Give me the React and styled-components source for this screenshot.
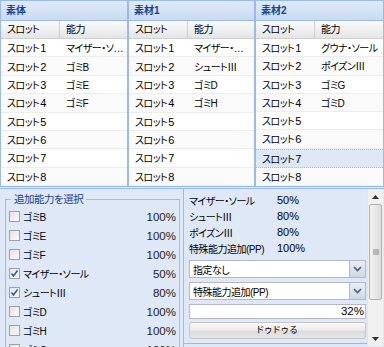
import React from "react";
import styled, { createGlobalStyle } from "styled-components";

const GlobalStyle = createGlobalStyle`
  html, body { margin: 0; padding: 0; }
  body {
    font-family: "Liberation Sans", "Noto Sans CJK JP", sans-serif;
    font-size: 10px;
    letter-spacing: -0.5px;
    color: #000;
    background: #fff;
    font-feature-settings: "palt";
  }
  * { box-sizing: border-box; }
`;

const Root = styled.div`
  width: 384px;
  height: 347px;
  overflow: hidden;
  display: flex;
  flex-direction: column;
  background: #dfe8f6;
`;

const GridArea = styled.div`
  display: grid;
  grid-template-columns: 128px 127px 129px;
  height: 188px;
  flex: none;
`;

const Panel = styled.div`
  height: 187px;
  border: 1px solid #99bbe8;
  background: #fff;
  display: flex;
  flex-direction: column;
  overflow: hidden;
`;

const PanelTitle = styled.div`
  height: 20px;
  flex: none;
  border-bottom: 1px solid #99bbe8;
  background: linear-gradient(#dfeaf8, #c9dbf1);
  color: #15428b;
  font-weight: bold;
  line-height: 19px;
  padding-left: 5px;
  letter-spacing: 0;
`;

const HeaderRow = styled.div`
  height: 18px;
  flex: none;
  display: grid;
  grid-template-columns: 59px 1fr;
  border-bottom: 1px solid #d0d0d0;
  background: linear-gradient(#fbfbfb, #e4e5e7);
`;

const HeaderCell = styled.div`
  padding-left: 6px;
  line-height: 17px;
  border-right: ${(p) => (p.$last ? "none" : "1px solid #d0d0d0")};
  white-space: nowrap;
  overflow: hidden;
`;

const Row = styled.div`
  flex: 1;
  display: grid;
  grid-template-columns: 59px 1fr;
  align-items: center;
  background: ${(p) => (p.$selected ? "#dfe8f6" : p.$alt ? "#fafafa" : "#fff")};
  border-bottom: ${(p) => (p.$selected ? "1px dotted #a3bae9" : "1px solid #ededed")};
  border-top: ${(p) => (p.$selected ? "1px dotted #a3bae9" : "none")};
`;

const Cell = styled.div`
  padding: 0 3px 0 6px;
  white-space: nowrap;
  overflow: hidden;
  text-overflow: ellipsis;
`;

const Num = styled.span`
  font-size: 11px;
  letter-spacing: 0;
  margin-left: 1px;
`;

const Bottom = styled.div`
  flex: 1;
  display: flex;
  border-top: 1px solid #99bbe8;
  min-height: 0;
`;

const LeftPane = styled.div`
  width: 184px;
  flex: none;
  border-right: 1px solid #99bbe8;
  padding: 4px 3px 0 5px;
  overflow: hidden;
`;

const FieldSet = styled.fieldset`
  margin: 0;
  border: 1px solid #b5b8c8;
  padding: 1px 3px 0 3px;
  min-width: 0;
`;

const Legend = styled.legend`
  color: #15428b;
  padding: 0 3px;
  margin-left: 2px;
  line-height: 13px;
  font-size: 10.5px;
`;

const CheckRow = styled.div`
  height: 19px;
  display: flex;
  align-items: center;
`;

const Box = styled.span`
  width: 11px;
  height: 11px;
  flex: none;
  border: 1px solid #a0a0a0;
  background: linear-gradient(135deg, #e4e4e4, #fbfbfb);
  margin-right: 3px;
  display: flex;
  align-items: center;
  justify-content: center;
`;

const CheckLabel = styled.span`
  flex: 1;
  white-space: nowrap;
`;

const Percent = styled.span`
  flex: none;
  font-size: 11.5px;
  letter-spacing: 0;
  color: #222;
`;

const RightPane = styled.div`
  width: 183px;
  flex: none;
  height: 155px;
  border-bottom: 1px solid #99bbe8;
  padding: 3px 1px 0 5px;
  display: flex;
  flex-direction: column;
`;

const StatLine = styled.div`
  height: 16px;
  display: flex;
  align-items: center;
`;

const StatName = styled.span`
  width: 88px;
  white-space: nowrap;
`;

const StatPct = styled.span`
  font-size: 11px;
  letter-spacing: 0;
`;

const Select = styled.div`
  height: 18px;
  margin-top: ${(p) => p.$mt}px;
  border: 1px solid #b5b8c8;
  background: #fff;
  display: flex;
  align-items: center;
`;

const SelectText = styled.span`
  flex: 1;
  padding-left: 3px;
  white-space: nowrap;
`;

const Trigger = styled.span`
  width: 16px;
  height: 16px;
  border-left: 1px solid #b5b8c8;
  background: linear-gradient(#e9eef5, #cdd7e4);
  display: flex;
  align-items: center;
  justify-content: center;
`;

const Input = styled.div`
  height: 15px;
  margin-top: 4px;
  border: 1px solid #b5b8c8;
  background: #fff;
  text-align: right;
  padding-right: 1px;
  line-height: 13px;
  font-size: 11.5px;
  letter-spacing: 0;
`;

const Button = styled.div`
  height: 17px;
  margin-top: 3px;
  border: 1px solid #c4c4c4;
  border-radius: 3px;
  background: linear-gradient(#fafafa, #e9e9e9 50%, #dcdcdc 51%, #e6e6e6);
  text-align: center;
  line-height: 15px;
  font-size: 9px;
  letter-spacing: 1px;
`;

const Scrollbar = styled.div`
  width: 16px;
  flex: none;
  height: 157px;
  background: #f0f0f0;
  display: flex;
  flex-direction: column;
  border-left: 1px solid #e3e3e3;
`;

const ScrollBtn = styled.div`
  height: 15px;
  flex: none;
  display: flex;
  align-items: center;
  justify-content: center;
`;

const Thumb = styled.div`
  height: 96px;
  margin: 0 1px;
  flex: none;
  border: 1px solid #b0b0b0;
  border-radius: 2px;
  background: linear-gradient(90deg, #f2f2f2, #dcdcdc);
  display: flex;
  align-items: center;
  justify-content: center;
`;

const Track = styled.div`
  flex: 1;
`;

const Chevron = () => (
  <svg width="9" height="6" viewBox="0 0 9 6">
    <path d="M1 1 L4.5 4.5 L8 1" fill="none" stroke="#4a5f80" strokeWidth="1.6" />
  </svg>
);

const Check = () => (
  <svg width="9" height="9" viewBox="0 0 9 9">
    <path d="M1.5 4.5 L3.5 7 L7.5 1.5" fill="none" stroke="#2a55b0" strokeWidth="1.5" />
  </svg>
);

const grids = [
  { title: "素体", abilities: ["マイザー・ソール", "ゴミB", "ゴミE", "ゴミF"] },
  { title: "素材1", abilities: ["マイザー・ソール", "シュートⅢ", "ゴミD", "ゴミH"] },
  { title: "素材2", abilities: ["グウナ・ソール", "ポイズンⅢ", "ゴミG", "ゴミD"], selected: 6 },
];

const choices = [
  { name: "ゴミB", pct: "100%", checked: false },
  { name: "ゴミE", pct: "100%", checked: false },
  { name: "ゴミF", pct: "100%", checked: false },
  { name: "マイザー・ソール", pct: "50%", checked: true },
  { name: "シュートⅢ", pct: "80%", checked: true },
  { name: "ゴミD", pct: "100%", checked: false },
  { name: "ゴミH", pct: "100%", checked: false },
  { name: "ゴミG", pct: "100%", checked: false },
];

const stats = [
  ["マイザー・ソール", "50%"],
  ["シュートⅢ", "80%"],
  ["ポイズンⅢ", "80%"],
  ["特殊能力追加(PP)", "100%"],
];

export default function App() {
  return (
    <>
      <GlobalStyle />
      <Root>
        <GridArea>
          {grids.map((g) => (
            <Panel key={g.title}>
              <PanelTitle>{g.title}</PanelTitle>
              <HeaderRow>
                <HeaderCell>スロット</HeaderCell>
                <HeaderCell $last>能力</HeaderCell>
              </HeaderRow>
              {Array.from({ length: 8 }, (_, i) => (
                <Row key={i} $alt={i % 2 === 1} $selected={g.selected === i}>
                  <Cell>スロット<Num>{i + 1}</Num></Cell>
                  <Cell>{g.abilities[i] || ""}</Cell>
                </Row>
              ))}
            </Panel>
          ))}
        </GridArea>
        <Bottom>
          <LeftPane>
            <FieldSet>
              <Legend>追加能力を選択</Legend>
              {choices.map((c) => (
                <CheckRow key={c.name}>
                  <Box>{c.checked && <Check />}</Box>
                  <CheckLabel>{c.name}</CheckLabel>
                  <Percent>{c.pct}</Percent>
                </CheckRow>
              ))}
            </FieldSet>
          </LeftPane>
          <RightPane>
            {stats.map(([n, p]) => (
              <StatLine key={n}>
                <StatName>{n}</StatName>
                <StatPct>{p}</StatPct>
              </StatLine>
            ))}
            <Select $mt={4}>
              <SelectText>指定なし</SelectText>
              <Trigger><Chevron /></Trigger>
            </Select>
            <Select $mt={4}>
              <SelectText>特殊能力追加(PP)</SelectText>
              <Trigger><Chevron /></Trigger>
            </Select>
            <Input>32%</Input>
            <Button>ドゥドゥる</Button>
          </RightPane>
          <Scrollbar>
            <ScrollBtn>
              <svg width="7" height="4" viewBox="0 0 7 4"><path d="M0 4 L3.5 0 L7 4 Z" fill="#333" /></svg>
            </ScrollBtn>
            <Thumb>
              <svg width="6" height="6" viewBox="0 0 6 6">
                <path d="M0 1h6M0 3h6M0 5h6" stroke="#888" strokeWidth="1" />
              </svg>
            </Thumb>
            <Track />
            <ScrollBtn>
              <svg width="7" height="4" viewBox="0 0 7 4"><path d="M0 0 L3.5 4 L7 0 Z" fill="#333" /></svg>
            </ScrollBtn>
          </Scrollbar>
        </Bottom>
      </Root>
    </>
  );
}
